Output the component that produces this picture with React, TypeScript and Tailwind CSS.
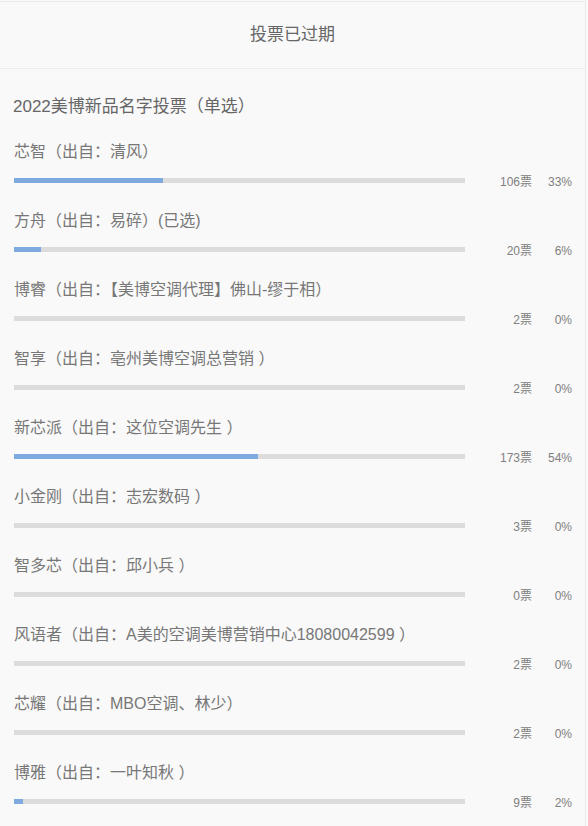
import React from "react";

const options = [
  { name: "芯智（出自：清风）", votes: 106, pct: 33 },
  { name: "方舟（出自：易碎）(已选)", votes: 20, pct: 6 },
  { name: "博睿（出自：【美博空调代理】佛山-缪于相）", votes: 2, pct: 0 },
  { name: "智享（出自：亳州美博空调总营销 ）", votes: 2, pct: 0 },
  { name: "新芯派（出自：这位空调先生 ）", votes: 173, pct: 54 },
  { name: "小金刚（出自：志宏数码 ）", votes: 3, pct: 0 },
  { name: "智多芯（出自：邱小兵 ）", votes: 0, pct: 0 },
  { name: "风语者（出自：A美的空调美博营销中心18080042599 ）", votes: 2, pct: 0 },
  { name: "芯耀（出自：MBO空调、林少）", votes: 2, pct: 0 },
  { name: "博雅（出自：一叶知秋 ）", votes: 9, pct: 2 },
];

const App = () => {
  return (
    <div
      className="h-[826px] overflow-hidden bg-[#f9f9f9] text-[#666] pt-px pr-[2px]"
      style={{ fontFamily: '"Liberation Sans", "Noto Sans CJK SC", sans-serif' }}
    >
      <div className="h-[825px] border-t border-r border-[#ececec]">
        {/* header */}
        <div className="h-[67px] flex items-center justify-center border-b border-[#ececec] text-[17px] text-[#666]">
          投票已过期
        </div>

        <div className="pt-[26px] pl-[13px] pr-[13px]">
          <div className="h-6 leading-6 text-[17px] text-[#666]">
            2022美博新品名字投票（单选）
          </div>

          <div className="mt-[21px] pl-px">
            {options.map((o) => (
              <div key={o.name} className="pb-[26px]">
                <div className="h-6 leading-6 text-[16px] text-[#777] whitespace-pre">{o.name}</div>
                <div className="mt-[14px] h-[5px] flex items-center">
                  <div className="w-[452px] h-[5px] bg-[#dcdcdc]">
                    <div
                      className="h-full bg-[#7eaadf]"
                      style={{ width: `${o.pct}%` }}
                    />
                  </div>
                  <div className="w-[67px] shrink-0 text-right text-[12px] text-[#808080] leading-4 mt-[2px]">
                    {o.votes}票
                  </div>
                  <div className="w-[40px] shrink-0 text-right text-[12px] text-[#808080] leading-4 mt-[2px]">
                    {o.pct}%
                  </div>
                </div>
              </div>
            ))}
          </div>
        </div>
      </div>
    </div>
  );
};

export default App;
